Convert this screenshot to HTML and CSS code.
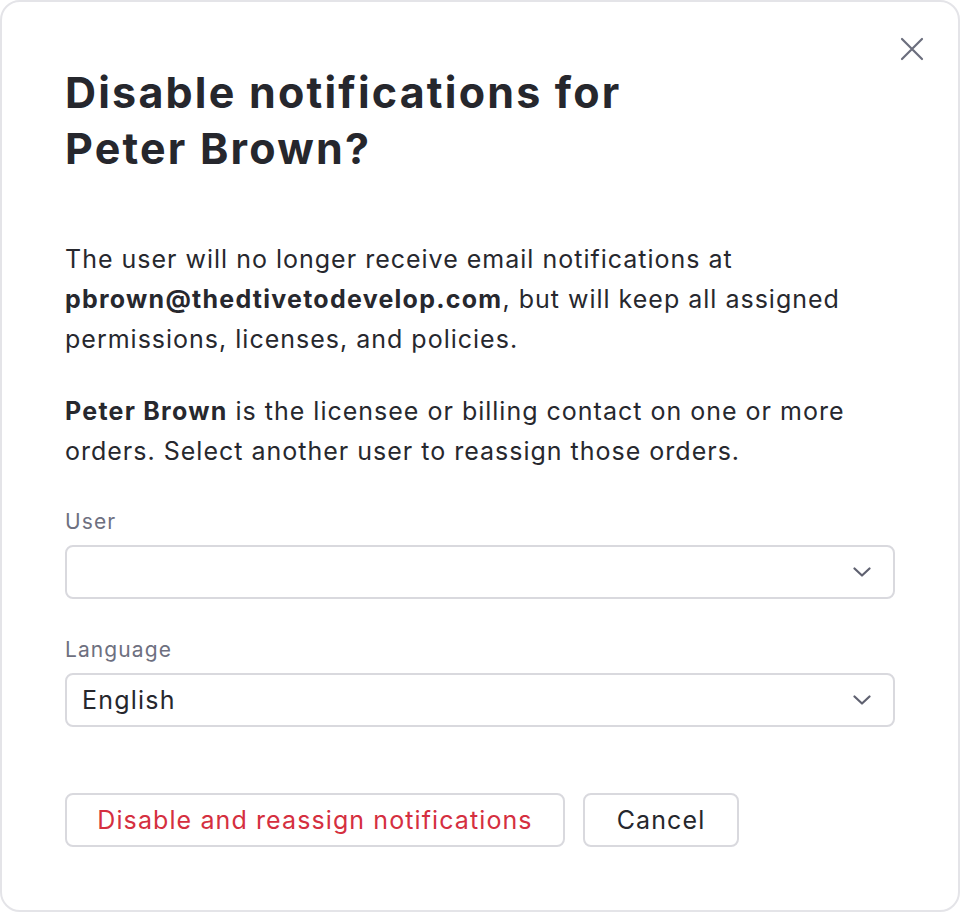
FILE: index.html
```html
<!DOCTYPE html>
<html lang="en">
<head>
<meta charset="utf-8">
<title>Disable notifications</title>
<link rel="stylesheet" href="styles.css">
</head>
<body>
<div class="dialog">
  <button class="close" aria-label="Close">
    <svg width="24" height="24" viewBox="0 0 24 24"><path d="M2 2 L22 22 M22 2 L2 22" stroke="#6b6e7d" stroke-width="2.2" stroke-linecap="round" fill="none"/></svg>
  </button>
  <h1 class="title">Disable notifications for<br>Peter Brown?</h1>
  <p class="text">The user will no longer receive email notifications at <b>pbrown@thedtivetodevelop.com</b>, but will keep all assigned permissions, licenses, and policies.</p>
  <p class="text second"><b>Peter Brown</b> is the licensee or billing contact on one or more orders. Select another user to reassign those orders.</p>
  <div class="field">
    <div class="label">User</div>
    <div class="select">
      <span class="value"></span>
      <svg class="chev" width="18" height="10" viewBox="0 0 18 10"><path d="M1.5 1.5 L9 8.5 L16.5 1.5" stroke="#5f6170" stroke-width="2.2" stroke-linecap="round" stroke-linejoin="round" fill="none"/></svg>
    </div>
  </div>
  <div class="field">
    <div class="label">Language</div>
    <div class="select">
      <span class="value">English</span>
      <svg class="chev" width="18" height="10" viewBox="0 0 18 10"><path d="M1.5 1.5 L9 8.5 L16.5 1.5" stroke="#5f6170" stroke-width="2.2" stroke-linecap="round" stroke-linejoin="round" fill="none"/></svg>
    </div>
  </div>
  <div class="actions">
    <button class="btn danger">Disable and reassign notifications</button>
    <button class="btn cancel">Cancel</button>
  </div>
</div>
</body>
</html>
```
FILE: styles.css
```css
html, body {
  margin: 0;
  padding: 0;
  background: #ffffff;
}
body {
  font-family: Inter, "Noto Sans", sans-serif;
  color: #27282e;
}
.dialog {
  position: relative;
  box-sizing: border-box;
  width: 960px;
  height: 912px;
  border: 2px solid #e4e4e8;
  border-radius: 20px;
  padding: 62px 63px 0 63px;
  background: #fff;
}
.close {
  position: absolute;
  top: 35px;
  right: 34px;
  width: 24px;
  height: 24px;
  padding: 0;
  border: 0;
  background: none;
  display: flex;
}
.title {
  margin: 0;
  font-size: 43px;
  line-height: 56px;
  font-weight: 700;
  letter-spacing: 2.2px;
  color: #26272d;
}
.text {
  margin: 63px 0 0 0;
  font-size: 25px;
  line-height: 40px;
  font-weight: 400;
  letter-spacing: 1px;
}
.text b {
  font-weight: 700;
  letter-spacing: 1.25px;
}
.text.second {
  margin-top: 32px;
}
.field {
  margin-top: 37px;
}
.label {
  font-size: 21px;
  line-height: 28px;
  letter-spacing: 1.1px;
  color: #6e7080;
}
.select {
  margin-top: 9px;
  box-sizing: border-box;
  height: 54px;
  border: 2px solid #d9d9de;
  border-radius: 8px;
  display: flex;
  align-items: center;
  justify-content: space-between;
  padding: 0 22px 0 15px;
}
.value {
  font-size: 25px;
  letter-spacing: 1.2px;
  color: #26272d;
}
.actions {
  margin-top: 66px;
  display: flex;
  gap: 18px;
}
.btn {
  box-sizing: border-box;
  height: 54px;
  border: 2px solid #d9d9de;
  border-radius: 8px;
  background: #fff;
  font-family: Inter, "Noto Sans", sans-serif;
  font-size: 25px;
  letter-spacing: 1.1px;
  color: #26272d;
  padding: 0;
}
.btn.danger {
  width: 500px;
  color: #d52f40;
}
.btn.cancel {
  width: 156px;
}
```
